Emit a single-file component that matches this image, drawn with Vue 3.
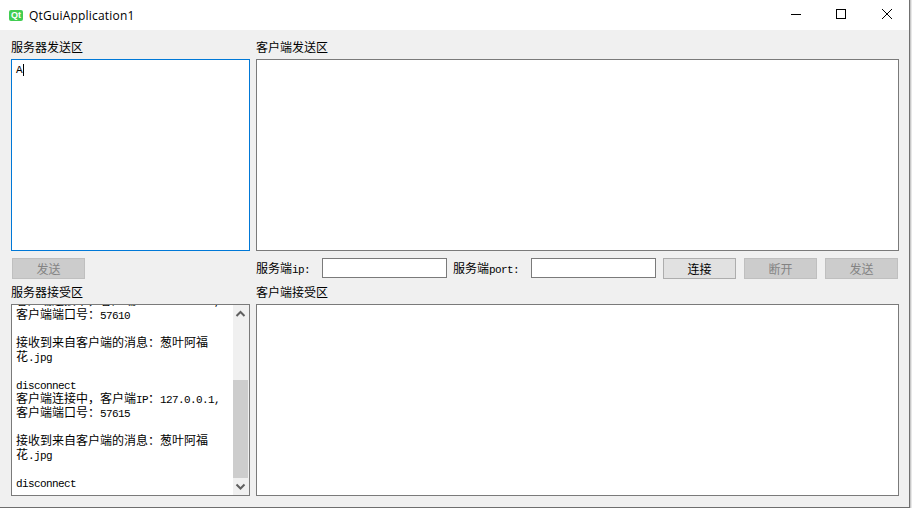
<template>
  <div class="window">
    <header class="titlebar">
      <div class="qt-logo">Qt</div>
      <div class="title">QtGuiApplication1</div>
      <div class="controls">
        <svg class="control" width="46" height="30" viewBox="0 0 46 30">
          <path d="M14 14.5h10" stroke="#000" fill="none" />
        </svg>
        <svg class="control" width="46" height="30" viewBox="0 0 46 30">
          <rect x="13.5" y="9.5" width="9" height="9" stroke="#000" fill="none" />
        </svg>
        <svg class="control" width="46" height="30" viewBox="0 0 46 30">
          <path d="M13 9l10 10M23 9L13 19" stroke="#000" fill="none" />
        </svg>
      </div>
    </header>

    <main class="content">
      <label class="caption"><MixedText text="服务器发送区" /></label>
      <label class="caption"><MixedText text="客户端发送区" /></label>

      <div class="textbox textbox--focus">
        <div class="typed"><span class="latin">A</span><span class="caret"></span></div>
      </div>
      <div class="textbox"></div>

      <div class="left-actions">
        <button class="btn" disabled><MixedText text="发送" /></button>
      </div>
      <div class="toolbar">
        <span class="field-label field-label--ip"><MixedText text="服务端ip:" /></span>
        <div class="field"></div>
        <span class="field-label field-label--port"><MixedText text="服务端port:" /></span>
        <div class="field"></div>
        <button class="btn btn--connect"><MixedText text="连接" /></button>
        <button class="btn" disabled><MixedText text="断开" /></button>
        <button class="btn" disabled><MixedText text="发送" /></button>
      </div>

      <label class="caption caption--lower"><MixedText text="服务器接受区" /></label>
      <label class="caption caption--lower"><MixedText text="客户端接受区" /></label>

      <div class="textbox textbox--log">
        <div class="log">
          <div v-for="(line, i) in logLines" :key="i" class="log-line">
            <MixedText :text="line" />
          </div>
        </div>
        <div class="scrollbar">
          <svg class="arrow" width="16" height="17" viewBox="0 0 16 17">
            <path d="M3.500 11L7.500 7l4 4" stroke="#606060" stroke-width="2" fill="none" />
          </svg>
          <div class="track"><div class="thumb"></div></div>
          <svg class="arrow" width="16" height="17" viewBox="0 0 16 17">
            <path d="M3.500 6.500l4 4 4-4" stroke="#606060" stroke-width="2" fill="none" />
          </svg>
        </div>
      </div>
      <div class="textbox"></div>
    </main>
  </div>
</template>

<script setup>
import { h } from 'vue';

// SimSun's latin glyphs are half a CJK cell wide, so ascii runs get their own span
const MixedText = (props) => {
  const runs = props.text.match(/[\x00-\x7f]+|[^\x00-\x7f]+/g) || [];
  return runs.map((run) =>
    /^[\x00-\x7f]/.test(run) ? h('span', { class: 'latin' }, run) : h('span', run)
  );
};
MixedText.props = ['text'];

const logLines = [
  '客户端连接中，客户端IP：127.0.0.1,',
  '客户端端口号：57610',
  '\u00a0',
  '接收到来自客户端的消息：葱叶阿福',
  '花.jpg',
  '\u00a0',
  'disconnect',
  '客户端连接中，客户端IP：127.0.0.1,',
  '客户端端口号：57615',
  '\u00a0',
  '接收到来自客户端的消息：葱叶阿福',
  '花.jpg',
  '\u00a0',
  'disconnect'
];
</script>

<style>
html,
body {
  margin: 0;
  background: #fff;
}
</style>

<style scoped>
.window {
  width: 909px;
  height: 507px;
  display: flex;
  flex-direction: column;
  border-right: 1px solid #707070;
  border-bottom: 1px solid #6e6e6e;
  box-shadow: 1px 0 0 #c8c8c8, 2px 0 0 #e8e8e8;
  font-family: "Noto Sans CJK SC", sans-serif;
  font-size: 12px;
  color: #000;
  overflow: hidden;
}

.titlebar {
  height: 30px;
  flex-shrink: 0;
  display: flex;
  align-items: center;
  background: #fff;
  padding-left: 9px;
}

.qt-logo {
  width: 14px;
  height: 11px;
  margin-right: 6px;
  background: #41cd52;
  border-radius: 2px;
  color: #fff;
  font-family: "Liberation Sans", sans-serif;
  font-size: 9px;
  font-weight: 700;
  line-height: 11px;
  text-align: center;
}

.title {
  font-family: "Open Sans", sans-serif;
  font-size: 12px;
  letter-spacing: 0.2px;
  color: #000;
}

.controls {
  margin-left: auto;
  display: flex;
  margin-right: -6px;
}

.control {
  display: block;
}

.content {
  flex: 1;
  display: grid;
  grid-template-columns: 239px 643px;
  grid-template-rows: 14px 192px 23px 15px 192px;
  column-gap: 6px;
  row-gap: 5px;
  padding: 10px 0 0 11px;
  background: #f0f0f0;
}

.caption {
  line-height: 14px;
  white-space: nowrap;
}

.caption--lower {
  margin-top: 1px;
}

.textbox {
  box-sizing: border-box;
  background: #fff;
  border: 1px solid #7a7a7a;
  min-height: 0;
}

.textbox--focus {
  border-color: #0078d7;
  padding: 3px 4px;
}

.textbox--log {
  display: flex;
  overflow: hidden;
}

.typed {
  display: flex;
  align-items: center;
  height: 14px;
  line-height: 14px;
}

.caret {
  width: 1px;
  height: 12px;
  background: #000;
  margin-left: 1px;
}

.window :deep(.latin) {
  font-family: "Liberation Mono", monospace;
  font-size: 11px;
  letter-spacing: -0.6px;
}

.left-actions {
  padding-left: 1px;
  margin-top: 2px;
}

.toolbar {
  display: flex;
  align-items: flex-start;
  margin-top: 2px;
}

.field-label {
  flex-shrink: 0;
  height: 20px;
  line-height: 20px;
  white-space: nowrap;
}

.field-label--ip {
  width: 66px;
}

.field-label--port {
  width: 78px;
  margin-left: 6px;
}

.field {
  box-sizing: border-box;
  flex-shrink: 0;
  width: 125px;
  height: 20px;
  background: #fff;
  border: 1px solid #7a7a7a;
}

.btn {
  box-sizing: border-box;
  flex-shrink: 0;
  width: 73px;
  height: 21px;
  padding: 0;
  margin-left: 8px;
  font: inherit;
  line-height: 19px;
  color: #000;
  background: #e1e1e1;
  border: 1px solid #adadad;
}

.left-actions .btn {
  margin-left: 0;
}

.btn--connect {
  margin-left: 7px;
}

.btn:disabled {
  color: #838383;
  background: #cccccc;
  border-color: #bfbfbf;
}

.log {
  flex: 1;
  min-width: 0;
  display: flex;
  flex-direction: column;
  justify-content: flex-end;
  padding: 0 0 6px 4px;
  overflow: hidden;
}

.log-line {
  flex-shrink: 0;
  height: 14px;
  line-height: 14px;
  white-space: nowrap;
}

.scrollbar {
  flex-shrink: 0;
  width: 16px;
  display: flex;
  flex-direction: column;
  background: #f0f0f0;
}

.arrow {
  display: block;
  flex-shrink: 0;
}

.track {
  flex: 1;
  padding-top: 58px;
}

.thumb {
  width: 15px;
  height: 98px;
  background: #cdcdcd;
}
</style>
